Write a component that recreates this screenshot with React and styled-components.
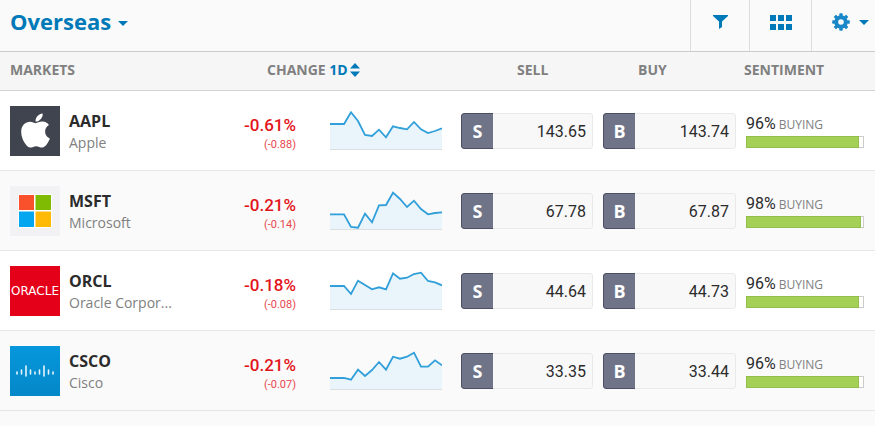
import React from "react";
import styled, { createGlobalStyle } from 'styled-components';
import { FaApple } from 'react-icons/fa';

const GlobalStyle = createGlobalStyle`
    * {
        box-sizing: border-box;
    }

    body {
        margin: 0;
        background: #fafafa;
        color: #2b2b2b;
        font-family: "Open Sans", "Noto Sans", sans-serif;
    }

    button {
        padding: 0;
        border: 0;
        background: none;
        font-family: inherit;
        cursor: pointer;
    }
`

const Toolbar = styled.header`
    display: flex;
    justify-content: space-between;
    height: 52px;
    border-bottom: 1px solid #ccc;
    background: #fafafa;
`

const ListButton = styled.button`
    display: flex;
    align-items: center;
    gap: 7px;
    padding: 0 10px 10px;
    color: #0079b8;
    font-size: 22px;
    font-weight: 700;

    svg {
        margin-top: 6px;
    }
`

const Tools = styled.div`
    display: flex;
`

const Tool = styled.button`
    display: flex;
    align-items: center;
    justify-content: ${props => props.$end ? 'flex-end' : 'center'};
    gap: 9px;
    width: ${props => props.$width}px;
    padding: 0 ${props => props.$end ? 6 : 0}px 7px 0;
    border-left: 1px solid #ddd;
    color: #0079b8;
`

const Table = styled.table`
    width: 100%;
    table-layout: fixed;
    border-spacing: 0;
`

const Col = styled.col`
    width: ${props => props.$width}px;
`

const Th = styled.th`
    height: 39px;
    padding: 0 0 2px ${props => props.$indent || 0}px;
    border-bottom: 1px solid #d3d3d3;
    background: #f6f6f6;
    color: #808080;
    font-size: 14px;
    font-weight: 700;
    line-height: 20px;
    text-align: left;
    white-space: nowrap;
`

const SortButton = styled.button`
    display: inline-flex;
    align-items: center;
    gap: 2px;
    color: #0079b8;
    font-size: 14px;
    font-weight: 700;
    line-height: 20px;
`

const Row = styled.tr`
    background: #fff;

    &:nth-child(even) {
        background: #fafafa;
    }
`

const Td = styled.td`
    height: 80px;
    padding: 0 8px 0 2px;
    border-bottom: 1px solid #e6e6e6;
`

const Market = styled.div`
    display: flex;
    align-items: center;
    gap: 9px;
    padding-left: 8px;
`

const Logo = styled.div`
    display: flex;
    flex: none;
    align-items: center;
    justify-content: center;
    width: 50px;
    height: 50px;
    background: ${props => props.$bg};
    color: #fff;
`

const Wordmark = styled.span`
    font-family: "DejaVu Sans", sans-serif;
    font-size: 12px;
`

const Label = styled.div`
    padding-top: 2px;
`

const Ticker = styled.div`
    font-size: 16px;
    font-weight: 700;
    line-height: 22px;
`

const Company = styled.div`
    color: #808080;
    font-size: 14px;
    line-height: 22px;
    white-space: nowrap;
`

const Change = styled.div`
    display: flex;
    align-items: center;
    justify-content: flex-end;
    gap: 34px;
    padding-right: 9px;
`

const Numbers = styled.div`
    padding-top: 8px;
    color: #e3131b;
    font-family: Roboto, sans-serif;
    line-height: 20px;
    text-align: right;
`

const Percent = styled.div`
    font-size: 17px;
    font-weight: 500;
`

const Points = styled.div`
    color: #e8474d;
    font-size: 11px;
`

const Trade = styled.button`
    display: flex;
    width: 100%;
    height: 36px;
    border-radius: 3px;
    overflow: hidden;
`

const Side = styled.span`
    width: 32px;
    height: 36px;
    border: 1px solid #4d5064;
    border-right: 0;
    border-radius: 3px 0 0 3px;
    background: #6f7489;
    color: #fff;
    font-size: 18px;
    font-weight: 700;
    line-height: 34px;
`

const Price = styled.span`
    flex: 1;
    height: 36px;
    padding-right: 6px;
    border: 1px solid #e9e9e9;
    border-left: 0;
    border-radius: 0 3px 3px 0;
    background: #f8f8f8;
    color: #2b2b2b;
    font-family: Roboto, sans-serif;
    font-size: 16px;
    line-height: 36px;
    text-align: right;
`

const Sentiment = styled.div`
    padding-right: 3px;
    color: #808080;
    font-size: 12px;
    line-height: 22px;
    white-space: nowrap;
`

const Share = styled.span`
    margin-right: 3px;
    color: #2b2b2b;
    font-family: Roboto, sans-serif;
    font-size: 16px;
`

const Bar = styled.div`
    height: 12px;
    border: 1px solid #ccc;
    background: #fff;
`

const Fill = styled.div`
    height: 12px;
    margin: -1px 0 0 -1px;
    border: 1px solid #92bf4b;
    background: #a3d055;
`

const Caret = () => (
    <svg width="10" height="5" viewBox="0 0 10 5" aria-hidden="true">
        <path d="M0 0h10L5 5z" fill="#0079b8" />
    </svg>
)

const FilterIcon = () => (
    <svg width="15" height="14" viewBox="0 0 15 14" aria-hidden="true">
        <path d="M0 0h15v1L9 6.5V12l-3 2V6.5L0 1z" fill="#0079b8" />
    </svg>
)

const GridIcon = () => (
    <svg width="22" height="15" viewBox="0 0 22 15" aria-hidden="true">
        <path d="M0 0h6v6H0zM8 0h6v6H8zM16 0h6v6h-6zM0 9h6v6H0zM8 9h6v6H8zM16 9h6v6h-6z" fill="#0079b8" />
    </svg>
)

const GearIcon = () => (
    <svg width="18" height="18" viewBox="-9 -9 18 18" fill="none" stroke="#1a87c8" aria-hidden="true">
        <circle r="4.8" strokeWidth="4" />
        {[0, 45, 90, 135, 180, 225, 270, 315].map(angle => (
            <path key={angle} d="M0-5v-3" strokeWidth="3.2" strokeLinecap="butt" transform={`rotate(${angle})`} />
        ))}
        {[0, 45, 90, 135, 180, 225, 270, 315].map(angle => (
            <path key={angle} d="M-.9-8h1.8" strokeWidth="1.6" strokeLinecap="round" transform={`rotate(${angle})`} />
        ))}
    </svg>
)

const SortIcon = () => (
    <svg width="10" height="14" viewBox="0 0 10 14" aria-hidden="true">
        <path d="M5 0l5 5.5H0zM0 8.5h10L5 14z" fill="#0079b8" />
    </svg>
)

const WindowsLogo = () => (
    <svg width="34" height="34" viewBox="0 0 34 34" aria-hidden="true">
        <path d="M0 0h34v34H0z" fill="#fff" />
        <path d="M1 1h15v15H1z" fill="#f8512b" />
        <path d="M17.5 1h15.5v15H17.5z" fill="#80bb03" />
        <path d="M1 17.5h15v15.5H1z" fill="#05a6f0" />
        <path d="M17.5 17.5h15.5v15.5H17.5z" fill="#ffba08" />
    </svg>
)

const CiscoLogo = () => (
    <svg width="40" height="12" viewBox="0 0 40 12" aria-hidden="true">
        <path
            d="M2 7v2M6.5 5v4M11 1v10M15.5 5v4M20 7v2M24.5 5v4M29 1v10M33.5 5v4M38 7v2"
            fill="none"
            stroke="#e5f5fc"
            strokeWidth="1.6"
            strokeLinecap="round"
        />
    </svg>
)

const Chart = ({ values }) => {
    // the first two points are flat, the rest is evenly spaced
    const points = values.map((y, i) => `${i ? 14 + (i - 1) * 7 : 0},${y}`).join(' ');

    return (
        <svg width="112" height="40" viewBox="0 0 112 40" aria-hidden="true">
            <polygon points={`0,38 ${points} 112,38`} fill="#e9f4fb" />
            <path d="M0 38.5h112" stroke="#dcdfe1" />
            <polyline points={points} fill="none" stroke="#309fda" strokeWidth="1.8" />
        </svg>
    )
}

const markets = [
    {
        ticker: 'AAPL',
        name: 'Apple',
        bg: '#40444f',
        logo: <FaApple size={39} />,
        percent: '-0.61%',
        points: '(-0.88)',
        chart: [13, 13, 1.3, 10, 24, 25, 18.7, 26.3, 15.3, 17, 18.3, 11, 18.3, 22, 20, 17.3],
        sell: '143.65',
        buy: '143.74',
        buying: 96
    },
    {
        ticker: 'MSFT',
        name: 'Microsoft',
        bg: '#f2f2f4',
        logo: <WindowsLogo />,
        percent: '-0.21%',
        points: '(-0.14)',
        chart: [23.3, 23.3, 36, 36.7, 22.7, 31.3, 14.3, 14, 1.7, 8, 16, 9.7, 18, 23.3, 22, 21.3],
        sell: '67.78',
        buy: '67.87',
        buying: 98
    },
    {
        ticker: 'ORCL',
        name: 'Oracle Corpor...',
        bg: '#e50019',
        logo: <Wordmark>ORACLE</Wordmark>,
        percent: '-0.18%',
        points: '(-0.08)',
        chart: [15, 15, 23, 9.7, 14, 18.3, 16.3, 18.3, 2.3, 7.7, 6.7, 3, 1.7, 10, 11.3, 14.3],
        sell: '44.64',
        buy: '44.73',
        buying: 96
    },
    {
        ticker: 'CSCO',
        name: 'Cisco',
        bg: 'linear-gradient(#0697dc, #0488c8)',
        logo: <CiscoLogo />,
        percent: '-0.21%',
        points: '(-0.07)',
        chart: [27, 27, 28.7, 18.7, 25, 19, 11, 18.7, 5.7, 7.7, 5.7, 1.7, 15.7, 15.7, 9.3, 14.3],
        sell: '33.35',
        buy: '33.44',
        buying: 96
    }
]

const MarketRow = ({ market }) => (
    <Row>
        <Td>
            <Market>
                <Logo $bg={market.bg}>{market.logo}</Logo>
                <Label>
                    <Ticker>{market.ticker}</Ticker>
                    <Company>{market.name}</Company>
                </Label>
            </Market>
        </Td>
        <Td>
            <Change>
                <Numbers>
                    <Percent>{market.percent}</Percent>
                    <Points>{market.points}</Points>
                </Numbers>
                <Chart values={market.chart} />
            </Change>
        </Td>
        <Td>
            <Trade>
                <Side>S</Side>
                <Price>{market.sell}</Price>
            </Trade>
        </Td>
        <Td>
            <Trade>
                <Side>B</Side>
                <Price>{market.buy}</Price>
            </Trade>
        </Td>
        <Td>
            <Sentiment>
                <Share>{market.buying}%</Share>
                BUYING
                <Bar role="progressbar" aria-label={`${market.ticker} buying`} aria-valuenow={market.buying}>
                    <Fill style={{ width: `${market.buying + 1}%` }} />
                </Bar>
            </Sentiment>
        </Td>
    </Row>
)

const App = () => (
    <>
        <GlobalStyle />
        <Toolbar>
            <ListButton>Overseas <Caret /></ListButton>
            <Tools>
                <Tool $width={59} aria-label="Filter"><FilterIcon /></Tool>
                <Tool $width={62} aria-label="Grid view"><GridIcon /></Tool>
                <Tool $width={64} $end aria-label="Settings">
                    <GearIcon />
                    <Caret />
                </Tool>
            </Tools>
        </Toolbar>
        <Table>
            <colgroup>
                <col />
                <Col $width={282} />
                <Col $width={142} />
                <Col $width={143} />
                <Col $width={131} />
            </colgroup>
            <thead>
                <tr>
                    <Th $indent={10}>MARKETS</Th>
                    <Th $indent={90}>CHANGE <SortButton>1D <SortIcon /></SortButton></Th>
                    <Th $indent={58}>SELL</Th>
                    <Th $indent={37}>BUY</Th>
                    <Th>SENTIMENT</Th>
                </tr>
            </thead>
            <tbody>
                {markets.map(market => <MarketRow key={market.ticker} market={market} />)}
            </tbody>
        </Table>
    </>
)

export default App;
